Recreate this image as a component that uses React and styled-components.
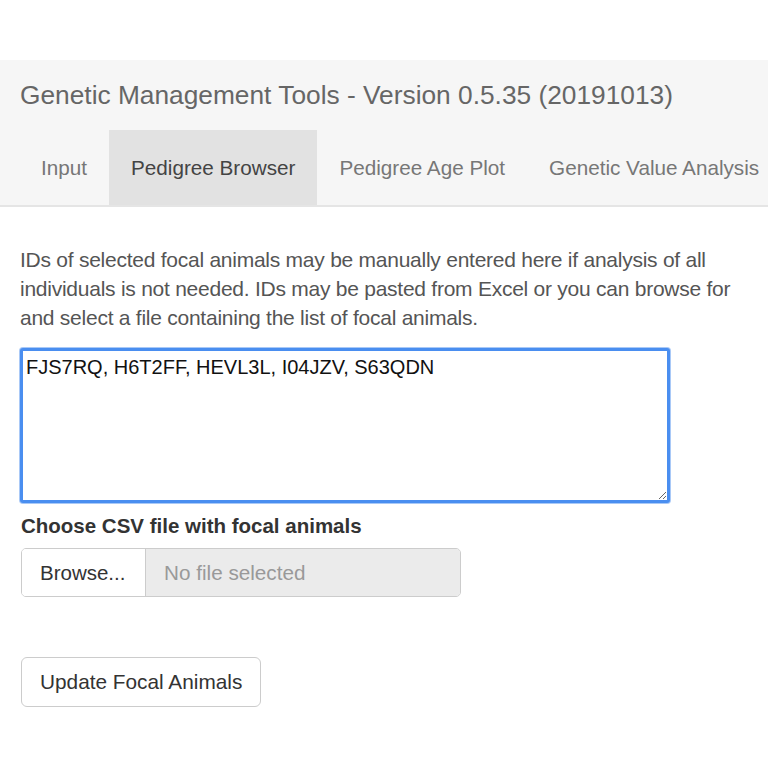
import React from "react";
import styled, { createGlobalStyle } from "styled-components";

const GlobalStyle = createGlobalStyle`
  body {
    margin: 0;
    background: #fff;
    font-family: "Liberation Sans", Arial, sans-serif;
  }
`;

const Page = styled.div`
  padding-top: 60px;
  width: 768px;
  overflow: hidden;
`;

const Navbar = styled.nav`
  background-color: #f6f6f6;
  border-bottom: 2px solid #e5e5e5;
`;

const Brand = styled.div`
  font-size: 26.3px;
  color: #666;
  padding: 0 20px;
  height: 70px;
  display: flex;
  align-items: center;
`;

const TabList = styled.ul`
  display: flex;
  margin: 0;
  padding: 0 0 0 19px;
  list-style: none;
  white-space: nowrap;
`;

const Tab = styled.li`
  padding: 0 22px;
  height: 75px;
  display: flex;
  align-items: center;
  font-size: 20.7px;
  color: ${(p) => (p.$active ? "#444" : "#777")};
  background-color: ${(p) => (p.$active ? "#e2e2e2" : "transparent")};
`;

const Content = styled.main`
  padding: 38px 20px 0 20px;
`;

const Intro = styled.p`
  margin: 0 0 16px;
  font-size: 21px;
  line-height: 29px;
  color: #555;
  letter-spacing: -0.25px;
  width: 728px;
`;

const Ids = styled.textarea`
  display: block;
  box-sizing: border-box;
  width: 650px;
  height: 155px;
  margin: 0;
  padding: 4px 3px;
  border: 3px solid #4a8ef0;
  border-radius: 3px;
  box-shadow: 0 0 0 1px #a9c9f7;
  font-family: "Liberation Sans", Arial, sans-serif;
  font-size: 20px;
  line-height: 24px;
  color: #111;
  resize: both;
  outline: none;
`;

const Label = styled.label`
  display: block;
  margin: 11px 0 10px 1px;
  font-size: 20.5px;
  font-weight: bold;
  color: #333;
`;

const FileField = styled.div`
  display: flex;
  width: 440px;
  height: 49px;
  margin-left: 1px;
  box-sizing: border-box;
  border: 1px solid #ccc;
  border-radius: 5px;
  overflow: hidden;
`;

const BrowseButton = styled.div`
  display: flex;
  align-items: center;
  padding: 0 18px;
  width: 124px;
  box-sizing: border-box;
  background: #fff;
  border-right: 1px solid #ccc;
  font-size: 20.5px;
  color: #333;
`;

const FileName = styled.div`
  flex: 1;
  display: flex;
  align-items: center;
  padding: 0 18px;
  background: #ebebeb;
  font-size: 20.7px;
  color: #999;
`;

const Button = styled.button`
  margin: 60px 0 0 1px;
  height: 50px;
  padding: 0 18px;
  background: #fff;
  border: 1px solid #ccc;
  border-radius: 6px;
  font-family: "Liberation Sans", Arial, sans-serif;
  font-size: 20.8px;
  color: #333;
`;

const App = () => {
  return (
    <Page>
      <GlobalStyle />
      <Navbar>
        <Brand>Genetic Management Tools - Version 0.5.35 (20191013)</Brand>
        <TabList>
          <Tab>Input</Tab>
          <Tab $active>Pedigree Browser</Tab>
          <Tab>Pedigree Age Plot</Tab>
          <Tab>Genetic Value Analysis</Tab>
        </TabList>
      </Navbar>
      <Content>
        <Intro>
          IDs of selected focal animals may be manually entered here if
          analysis of all individuals is not needed. IDs may be pasted from
          Excel or you can browse for and select a file containing the list of
          focal animals.
        </Intro>
        <Ids defaultValue="FJS7RQ, H6T2FF, HEVL3L, I04JZV, S63QDN" />
        <Label>Choose CSV file with focal animals</Label>
        <FileField>
          <BrowseButton>Browse...</BrowseButton>
          <FileName>No file selected</FileName>
        </FileField>
        <Button>Update Focal Animals</Button>
      </Content>
    </Page>
  );
};

export default App;
